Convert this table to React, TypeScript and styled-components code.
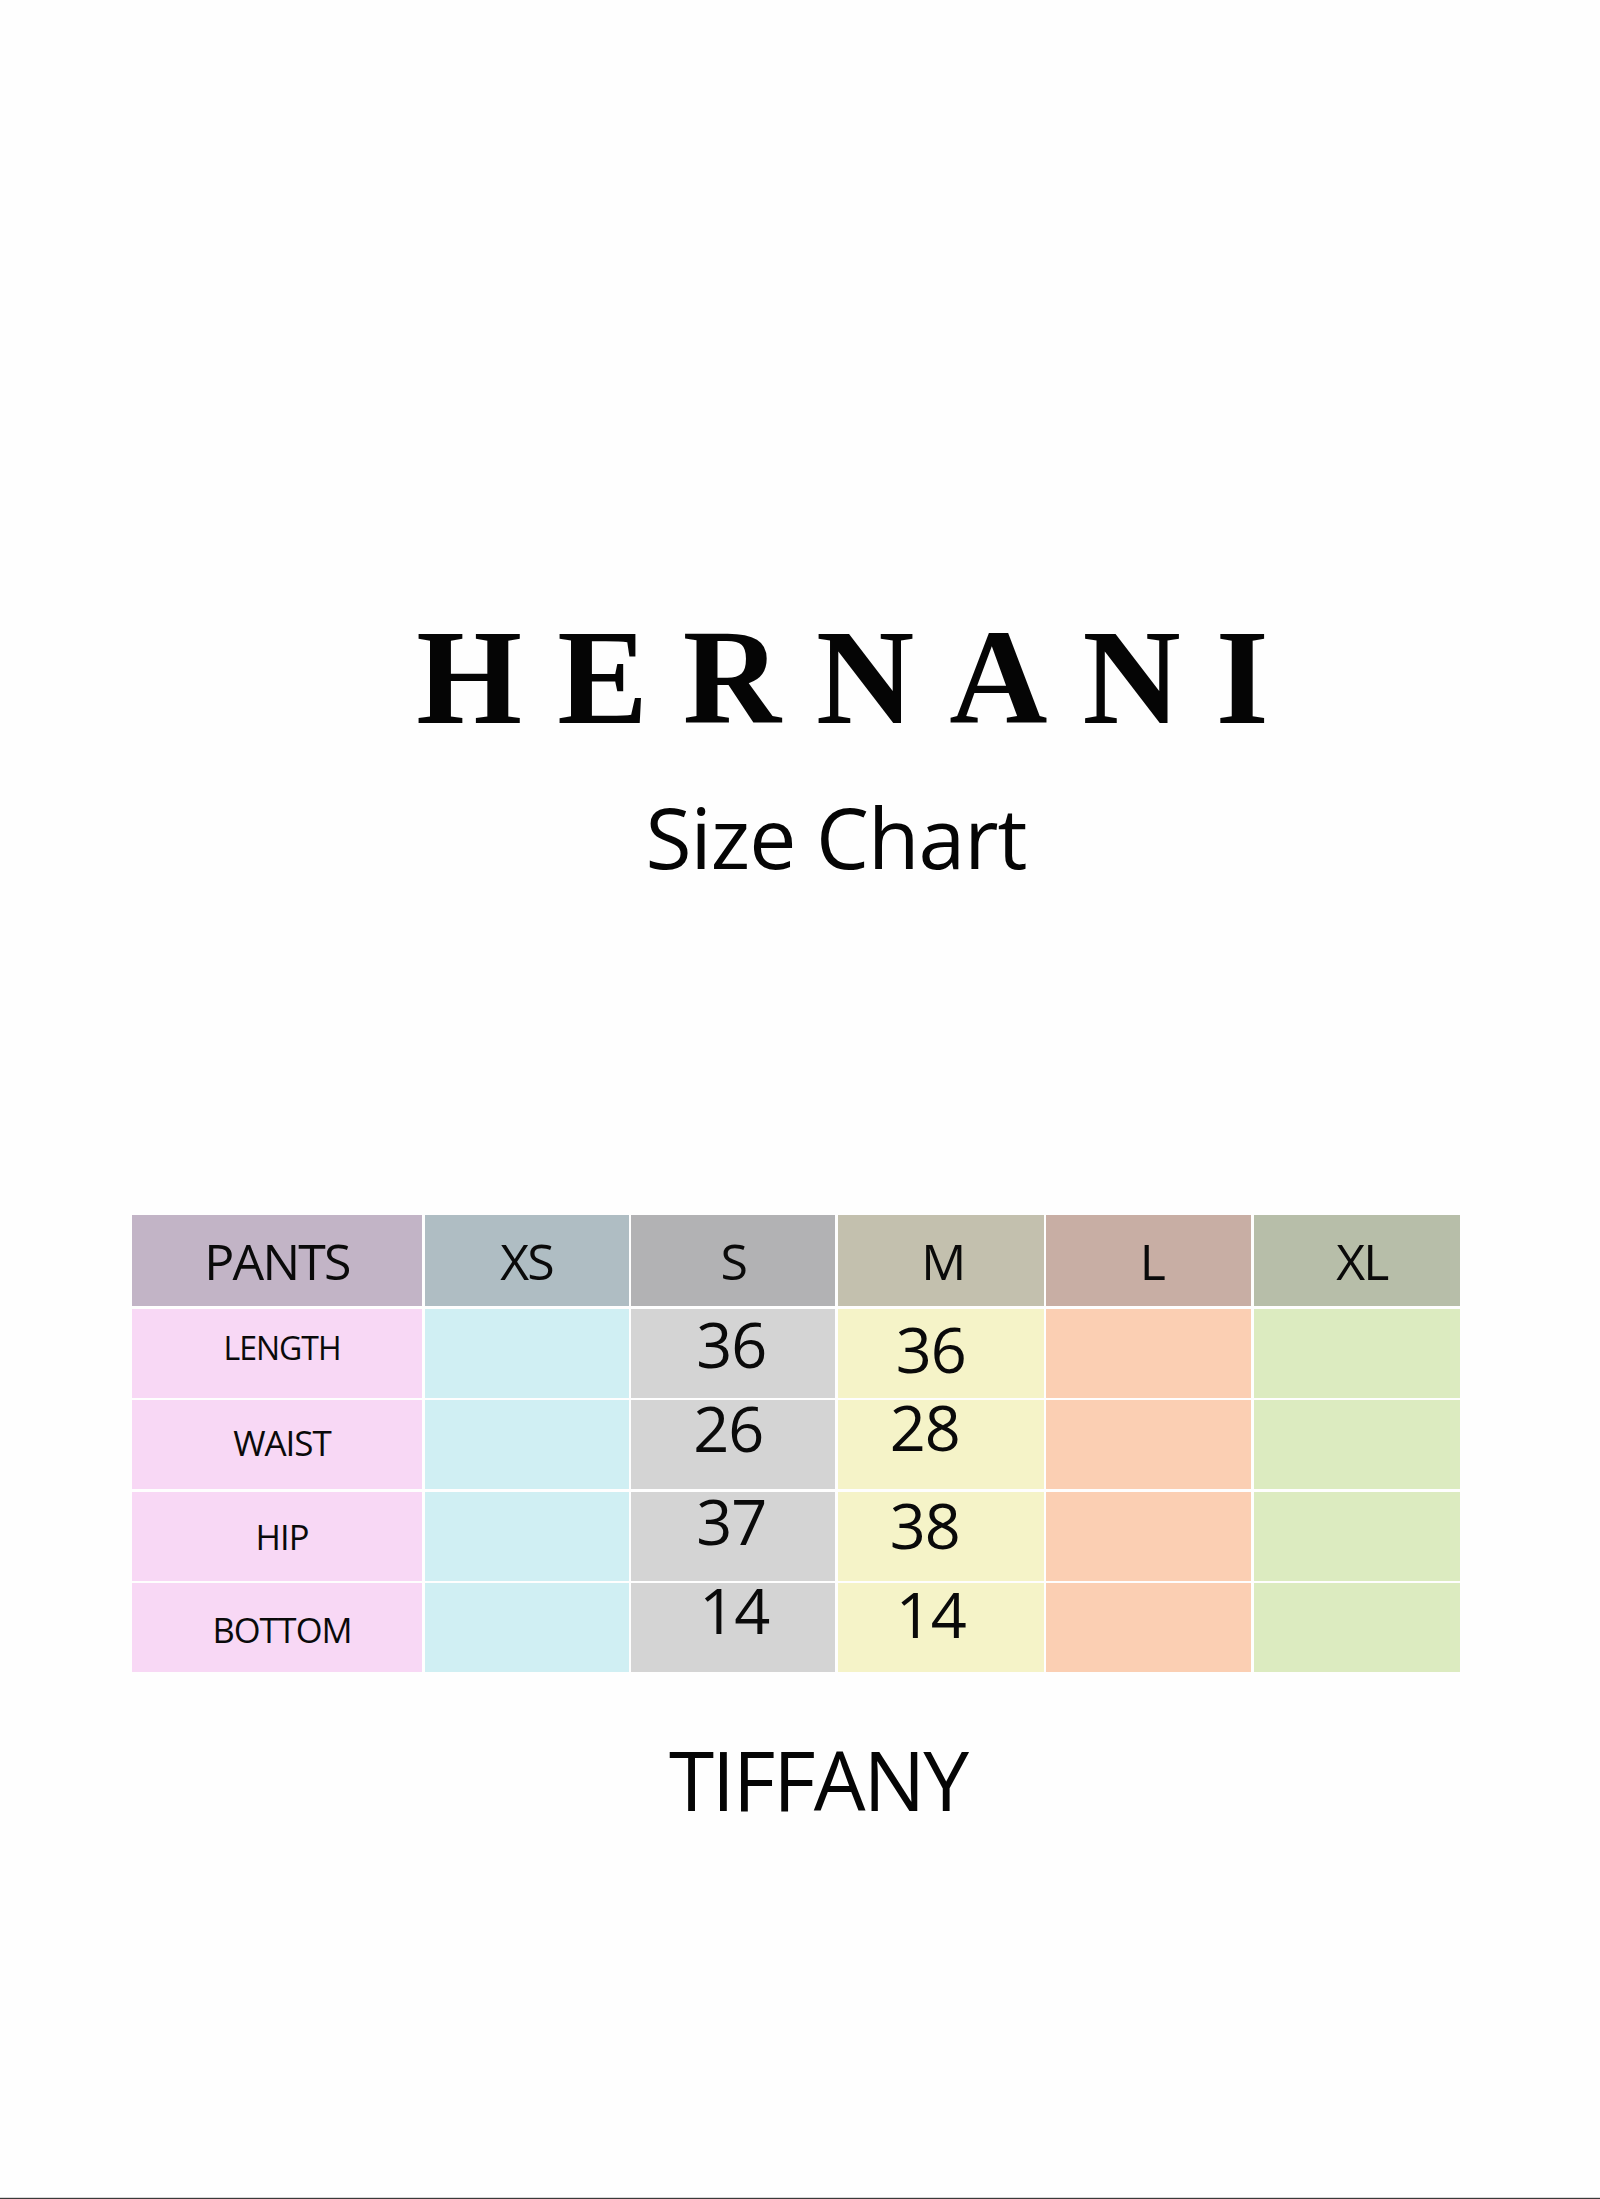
import React from "react";
import styled, { createGlobalStyle } from "styled-components";

const GlobalStyle = createGlobalStyle`
  html, body {
    margin: 0;
    padding: 0;
    background: #fefefe;
  }
  * { box-sizing: border-box; }
`;

const Page = styled.div`
  width: 1600px;
  height: 2199px;
  display: flex;
  flex-direction: column;
  background: #fefefe;
  color: #0a0a0a;
  overflow: hidden;
`;

const Brand = styled.h1`
  margin: 609px 0 0 0;
  padding-left: 120px;
  text-align: center;
  font-family: "Liberation Serif", "Times New Roman", serif;
  font-weight: 700;
  font-size: 136px;
  line-height: 136px;
  letter-spacing: 35px;
  color: #050505;
`;

const Heading = styled.div<{ $top: number; $shift: number; $size: number; $track: number }>`
  margin-top: ${(p) => p.$top}px;
  padding-left: ${(p) => p.$shift * 2}px;
  text-align: center;
  font-family: "Open Sans", "Noto Sans", sans-serif;
  font-weight: 400;
  font-size: ${(p) => p.$size}px;
  line-height: 1;
  letter-spacing: ${(p) => p.$track}px;
  color: #050505;
`;

const TableWrap = styled.div`
  margin-top: 336px;
  padding-left: 132px;
`;

const Grid = styled.div`
  display: grid;
  grid-template-columns: 290px 204px 204px 206px 205px 206px;
  grid-template-rows: 91px repeat(4, 89px);
  column-gap: 2.6px;
  row-gap: 2.6px;
  width: 1328px;
  font-family: "Open Sans", "Noto Sans", sans-serif;
  color: #0a0a0a;
`;

const HeadCell = styled.div<{ $bg: string; $dx?: number }>`
  background: ${(p) => p.$bg};
  display: flex;
  align-items: center;
  justify-content: center;
  padding-left: ${(p) => (p.$dx ?? 0) * 2}px;
  font-size: 50px;
  line-height: 1;
  letter-spacing: -1.8px;
`;

const LabelCell = styled.div`
  background: #f8d8f5;
  display: flex;
  align-items: center;
  justify-content: center;
  padding-left: 10px;
  line-height: 1;
  letter-spacing: -1px;
`;

const Label = styled.span<{ $dy: number; $size: number }>`
  margin-top: ${(p) => p.$dy * 2}px;
  font-size: ${(p) => p.$size}px;
`;

const ValueCell = styled.div<{ $bg: string }>`
  background: ${(p) => p.$bg};
  display: flex;
  align-items: flex-start;
  justify-content: center;
`;

const Value = styled.span<{ $dx: number; $dy: number }>`
  margin-top: ${(p) => p.$dy}px;
  margin-left: ${(p) => p.$dx * 2}px;
  font-size: 63px;
  line-height: 1;
  letter-spacing: -1px;
`;

const Footer = styled.div`
  margin-top: auto;
  height: 2px;
  background: #3a3a3a;
  border-top: 1px solid #d8d8d8;
`;

const headers = [
  { text: "PANTS", bg: "#c2b4c6", dx: -2 },
  { text: "XS", bg: "#afbdc3", dx: -1 },
  { text: "S", bg: "#b2b2b4", dx: 0 },
  { text: "M", bg: "#c3c0ae", dx: 2 },
  { text: "L", bg: "#c8aea4", dx: 3 },
  { text: "XL", bg: "#b7bea9", dx: 5 },
];

type Val = { v: string; dx: number; dy: number } | null;

const rows: { label: string; dy: number; size: number; cells: Val[] }[] = [
  {
    label: "LENGTH",
    dy: -5,
    size: 32,
    cells: [null, { v: "36", dx: -2, dy: 3 }, { v: "36", dx: -10, dy: 8 }, null, null],
  },
  {
    label: "WAIST",
    dy: -2,
    size: 35,
    cells: [null, { v: "26", dx: -5, dy: -4 }, { v: "28", dx: -16, dy: -5 }, null, null],
  },
  {
    label: "HIP",
    dy: 1,
    size: 34.5,
    cells: [null, { v: "37", dx: -2, dy: -3 }, { v: "38", dx: -16, dy: 1 }, null, null],
  },
  {
    label: "BOTTOM",
    dy: 2,
    size: 34.5,
    cells: [null, { v: "14", dx: 1, dy: -5 }, { v: "14", dx: -10, dy: -1 }, null, null],
  },
];

const colBg = ["#d0eff3", "#d4d4d4", "#f5f3c8", "#fbcfb3", "#dcebc0"];

export default function App() {
  return (
    <>
      <GlobalStyle />
      <Page>
        <Brand>HERNANI</Brand>
        <Heading $top={50} $shift={36} $size={84} $track={-1}>
          Size Chart
        </Heading>
        <TableWrap>
          <Grid>
            {headers.map((h) => (
              <HeadCell key={h.text} $bg={h.bg} $dx={h.dx}>
                {h.text}
              </HeadCell>
            ))}
            {rows.map((r) => (
              <React.Fragment key={r.label}>
                <LabelCell>
                  <Label $dy={r.dy} $size={r.size}>
                    {r.label}
                  </Label>
                </LabelCell>
                {r.cells.map((c, i) => (
                  <ValueCell key={i} $bg={colBg[i]}>
                    {c && (
                      <Value $dx={c.dx} $dy={c.dy}>
                        {c.v}
                      </Value>
                    )}
                  </ValueCell>
                ))}
              </React.Fragment>
            ))}
          </Grid>
        </TableWrap>
        <Heading $top={66} $shift={18} $size={82} $track={-2}>
          TIFFANY
        </Heading>
        <Footer />
      </Page>
    </>
  );
}
